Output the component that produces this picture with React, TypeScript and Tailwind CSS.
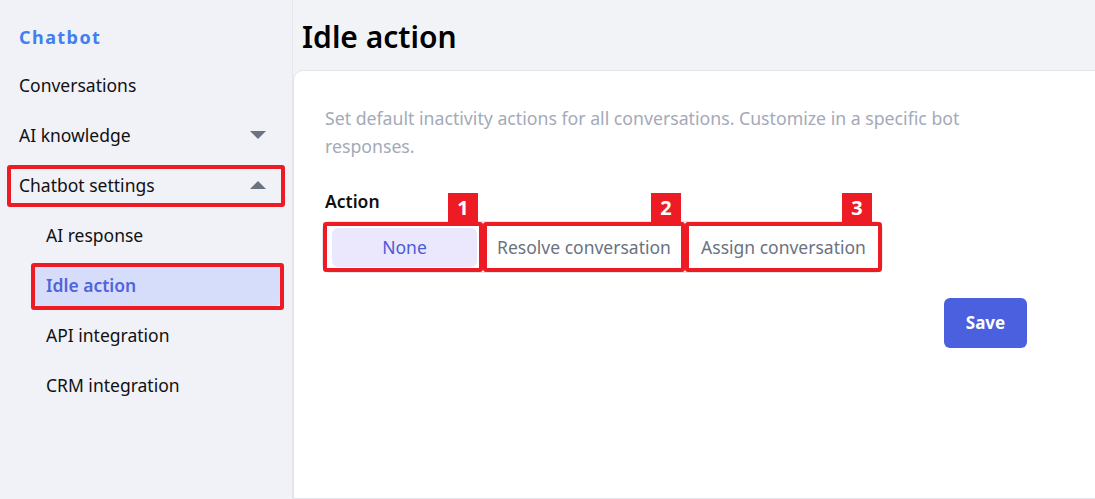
import React from "react";

const navItems = [
  { label: "Conversations" },
  { label: "AI knowledge", caret: "down" },
  { label: "Chatbot settings", caret: "up", marked: true },
];

const subItems = ["AI response", "Idle action", "API integration", "CRM integration"];

const actions = [
  { label: "None", width: "w-[160px]", badge: "right-[5px]" },
  { label: "Resolve conversation", width: "w-[202px]", badge: "right-[4px]" },
  { label: "Assign conversation", width: "w-[197px]", badge: "right-[10px]" },
];

function Caret({ dir }: { dir: string }) {
  return (
    <svg width="18" height="10" viewBox="0 0 18 10" className="text-[#6b7280]">
      {dir === "down" ? <path d="M1 1h16L9 9z" fill="currentColor" /> : <path d="M1 9h16L9 1z" fill="currentColor" />}
    </svg>
  );
}

export default function App() {
  return (
    <div className="flex h-[499px] w-[1095px] overflow-hidden bg-[#f2f3f6] font-['Noto_Sans','Open_Sans',sans-serif] text-[#111]">
      {/* Sidebar */}
      <aside className="flex w-[293px] shrink-0 flex-col border-r border-[#e4e6ec] bg-[#f0f2f7] pt-[22px]">
        <div className="px-[19px] text-[18px] font-bold leading-[30px] tracking-[0.08em] text-[#3f7ff0]">Chatbot</div>
        <nav className="mt-[8px] flex flex-col">
          {navItems.map((item) => (
            <div key={item.label} className="relative mx-[7px] flex h-[50px] items-center justify-between pl-[12px] pr-[18px]">
              <span className="text-[17.5px]">{item.label}</span>
              {item.caret && <Caret dir={item.caret} />}
              {item.marked && (
                <span className="pointer-events-none absolute inset-x-0 top-[5px] h-[42px] rounded-[3px] border-[4px] border-[#ed1c24]" />
              )}
            </div>
          ))}
          {subItems.map((label) => {
            const active = label === "Idle action";
            return (
              <div key={label} className="relative flex h-[50px] items-center">
                <div
                  className={`ml-[34px] mr-[11px] flex h-[42px] flex-1 items-center rounded-md pl-[12px] text-[17.5px] ${
                    active ? "bg-[#d6ddfb] font-semibold text-[#5264dc]" : ""
                  }`}
                >
                  {label}
                </div>
                {active && (
                  <span className="pointer-events-none absolute left-[31px] right-[8px] top-[3px] h-[47px] rounded-[3px] border-[4px] border-[#ed1c24]" />
                )}
              </div>
            );
          })}
        </nav>
      </aside>

      {/* Main */}
      <main className="flex min-w-0 flex-1 flex-col">
        <h1 className="h-[70px] pl-[9px] pt-[16px] text-[30px] font-semibold leading-[42px] text-black">Idle action</h1>
        <section className="-mr-[20px] flex-1 rounded-tl-[10px] border border-[#e3e5ea] bg-white pl-[31px] pr-[87px] pt-[33px]">
          <p className="max-w-[680px] text-[17.7px] leading-[28px] text-[#a3aab8]">
            Set default inactivity actions for all conversations. Customize in a specific bot responses.
          </p>
          <div className="mt-[27px] text-[17.5px] font-semibold leading-[28px]">Action</div>
          <div className="-ml-[3px] mt-[6px] inline-flex items-center rounded-lg border border-[#e3e5ea] bg-white">
            {actions.map((a, i) => (
              <div key={a.label} className={`relative flex h-[50px] items-center text-[17.5px] ${a.width}`}>
                <span
                  className={`flex h-[39px] w-full items-center justify-center rounded-md ${
                    i === 0 ? "ml-[9px] mr-[6px] bg-[#ebe8fd] text-[#4a5bd8]" : "text-[#6b7280]"
                  }`}
                >
                  {a.label}
                </span>
                <span className="pointer-events-none absolute inset-0 rounded-[3px] border-[4px] border-[#ed1c24]" />
                <span
                  className={`absolute -top-[29px] ${a.badge} flex h-[30px] w-[30px] items-center justify-center bg-[#ed1c24] text-[20px] font-bold leading-none text-white`}
                >
                  {i + 1}
                </span>
              </div>
            ))}
          </div>
          <div className="mt-[25px] flex justify-end">
            <button className="h-[50px] w-[83px] rounded-md bg-[#4b60df] text-[17px] font-bold text-white">Save</button>
          </div>
        </section>
      </main>
    </div>
  );
}
